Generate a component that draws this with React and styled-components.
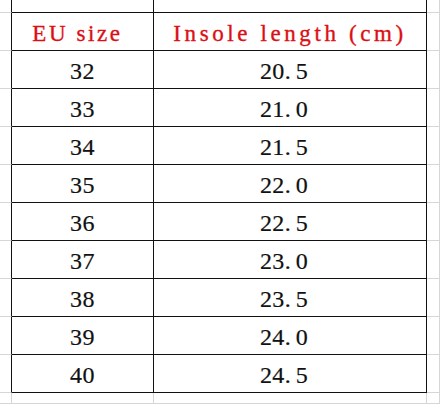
import React from "react";
import styled, { createGlobalStyle } from "styled-components";

const Global = createGlobalStyle`
  html, body { margin: 0; padding: 0; background: #ffffff; }
  body { width: 440px; height: 404px; overflow: hidden; }
`;

const GRAY = "#d6d6d6";
const BLACK = "#111111";

const Sheet = styled.div`
  display: grid;
  grid-template-columns: 12px 142px 273px 1fr;
  grid-template-rows: 13px repeat(10, 38px) 1fr;
  width: 440px;
  height: 404px;
  background: #ffffff;
`;

const Cell = styled.div`
  box-sizing: border-box;
  border-right: 1px solid ${(p) => (p.$rb ? BLACK : GRAY)};
  border-bottom: 1px solid ${(p) => (p.$bb ? BLACK : GRAY)};
  display: flex;
  align-items: center;
  justify-content: center;
  padding-top: 4px;
  padding-right: ${(p) => p.$shift || 0}px;
  white-space: pre;
  overflow: hidden;
`;

const HeadText = styled.span`
  font-family: "Liberation Serif", "Times New Roman", "DejaVu Serif", serif;
  font-size: 23px;
  color: #dc0f14;
  letter-spacing: ${(p) => p.$ls}px;
  -webkit-text-stroke: 0.35px #dc0f14;
`;

const NumText = styled.span`
  font-family: "Liberation Serif", "Times New Roman", "DejaVu Serif", serif;
  font-size: 24px;
  color: #111111;
  letter-spacing: 0.4px;
  -webkit-text-stroke: 0.2px #111111;
`;

const Dot = styled.span`
  display: inline-block;
  width: 11px;
`;

const rows = [
  ["32", "20.5"],
  ["33", "21.0"],
  ["34", "21.5"],
  ["35", "22.0"],
  ["36", "22.5"],
  ["37", "23.0"],
  ["38", "23.5"],
  ["39", "24.0"],
  ["40", "24.5"],
];

function Num({ value }) {
  const [a, b] = value.split(".");
  if (b === undefined) return <NumText>{value}</NumText>;
  return (
    <NumText>
      {a}
      <Dot>.</Dot>
      {b}
    </NumText>
  );
}

export default function App() {
  return (
    <>
      <Global />
      <Sheet>
        {/* top partial row */}
        <Cell $rb />
        <Cell $rb $bb />
        <Cell $rb $bb />
        <Cell />

        {/* header */}
        <Cell $rb />
        <Cell $rb $bb $shift={10}>
          <HeadText $ls={2.6}>EU size</HeadText>
        </Cell>
        <Cell $rb $bb>
          <HeadText $ls={3.6}>Insole length (cm)</HeadText>
        </Cell>
        <Cell />

        {rows.map(([eu, len]) => (
          <React.Fragment key={eu}>
            <Cell $rb />
            <Cell $rb $bb>
              <Num value={eu} />
            </Cell>
            <Cell $rb $bb $shift={12}>
              <Num value={len} />
            </Cell>
            <Cell />
          </React.Fragment>
        ))}

        {/* bottom partial row */}
        <Cell />
        <Cell />
        <Cell />
        <Cell />
      </Sheet>
    </>
  );
}
